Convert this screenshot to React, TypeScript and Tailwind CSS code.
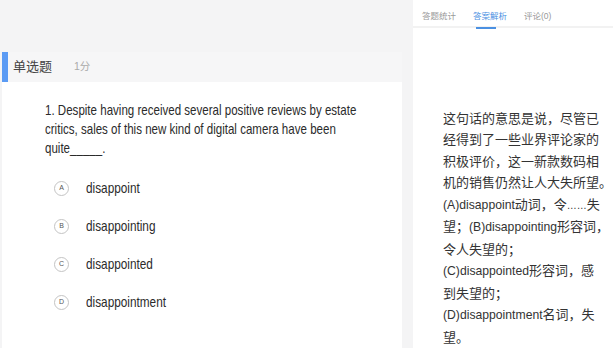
import React from "react";

const options = [
  { k: "A", t: "disappoint" },
  { k: "B", t: "disappointing" },
  { k: "C", t: "disappointed" },
  { k: "D", t: "disappointment" },
];

function L({ children }: { children: React.ReactNode }) {
  return <span className="text-[12.2px]">{children}</span>;
}

export default function App() {
  return (
    <div className="flex h-[348px] w-[613px] overflow-hidden bg-[#f4f4f5] font-['Liberation_Sans','Noto_Sans_CJK_SC',sans-serif]">
      <div className="w-[402px] shrink-0 pl-[2px] pt-[52px]">
        <div className="h-[296px] bg-white">
          <div className="flex h-[30px] items-center bg-[#f6f6f7]">
            <div className="h-full w-[6px] bg-[#5b9bf4]" />
            <span className="ml-[5px] text-[13px] text-[#444]">单选题</span>
            <span className="ml-[22px] text-[10.5px] text-[#aaa]">1分</span>
          </div>
          <div className="pl-[43px] pt-[18px]">
            <p className="origin-left scale-x-[0.77] whitespace-nowrap text-[15px] leading-[19px] text-[#2b2b2b]">
              1. Despite having received several positive reviews by estate
              <br />
              critics, sales of this new kind of digital camera have been
              <br />
              quite_____.
            </p>
            <div className="mt-[12px] flex flex-col pl-[9px]">
              {options.map((o) => (
                <div key={o.k} className="flex h-[38px] items-center">
                  <div className="flex h-[15px] w-[15px] items-center justify-center rounded-full border border-[#c4c4c4] text-[7px] text-[#555]">
                    {o.k}
                  </div>
                  <span className="ml-[17px] inline-block origin-left scale-x-[0.786] whitespace-nowrap text-[15px] text-[#2b2b2b]">
                    {o.t}
                  </span>
                </div>
              ))}
            </div>
          </div>
        </div>
      </div>
      <div className="ml-[11px] flex flex-1 flex-col bg-white">
        <div className="flex h-[32px] items-start border-b-2 border-[#f2f2f2] pl-[9px] pt-[10px] text-[8.5px] leading-[12px]">
          <span className="w-[51px] text-[#999]">答题统计</span>
          <span className="relative w-[51px] text-[#4a90e2]">
            答案解析
            <span className="absolute left-[3px] top-[17px] h-[2px] w-[20px] bg-[#4a90e2]" />
          </span>
          <span className="text-[#999]">评论(0)</span>
        </div>
        <div className="whitespace-nowrap pl-[30px] pt-[80px] text-[13px] leading-[21.5px] text-[#333]">
          <div>这句话的意思是说，尽管已</div>
          <div>经得到了一些业界评论家的</div>
          <div>积极评价，这一新款数码相</div>
          <div>机的销售仍然让人大失所望。</div>
          <div><L>(A)disappoint</L>动词，令<span className="text-[10px]">……</span>失</div>
          <div>望；<L>(B)disappointing</L>形容词，</div>
          <div>令人失望的；</div>
          <div><L>(C)disappointed</L>形容词，感</div>
          <div>到失望的；</div>
          <div><L>(D)disappointment</L>名词，失</div>
          <div>望。</div>
        </div>
      </div>
    </div>
  );
}
